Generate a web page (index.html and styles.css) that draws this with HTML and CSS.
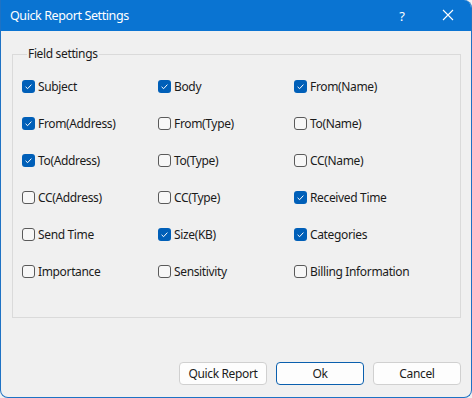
FILE: index.html
```html
<!DOCTYPE html>
<html>
<head>
<meta charset="utf-8">
<link rel="stylesheet" href="styles.css">
</head>
<body>
<div class="window">
  <div class="titlebar">
    <span class="title">Quick Report Settings</span>
    <span class="help">?</span>
    <span class="close">
      <svg width="12" height="12" viewBox="0 0 12 12"><path d="M1 1 L11 11 M11 1 L1 11" stroke="#fff" stroke-width="1.1" fill="none"/></svg>
    </span>
  </div>
  <div class="content">
    <fieldset class="group">
      <legend class="legend">Field settings</legend>
      <div class="grid">
        <label class="item"><span class="box on"><svg width="13" height="13" viewBox="0 0 13 13"><path d="M3.6 6.8 L5.6 8.7 L9.4 4.6" stroke="#fff" stroke-width="1" fill="none"/></svg></span>Subject</label>
        <label class="item"><span class="box on"><svg width="13" height="13" viewBox="0 0 13 13"><path d="M3.6 6.8 L5.6 8.7 L9.4 4.6" stroke="#fff" stroke-width="1" fill="none"/></svg></span>Body</label>
        <label class="item"><span class="box on"><svg width="13" height="13" viewBox="0 0 13 13"><path d="M3.6 6.8 L5.6 8.7 L9.4 4.6" stroke="#fff" stroke-width="1" fill="none"/></svg></span>From(Name)</label>

        <label class="item"><span class="box on"><svg width="13" height="13" viewBox="0 0 13 13"><path d="M3.6 6.8 L5.6 8.7 L9.4 4.6" stroke="#fff" stroke-width="1" fill="none"/></svg></span>From(Address)</label>
        <label class="item"><span class="box"></span>From(Type)</label>
        <label class="item"><span class="box"></span>To(Name)</label>

        <label class="item"><span class="box on"><svg width="13" height="13" viewBox="0 0 13 13"><path d="M3.6 6.8 L5.6 8.7 L9.4 4.6" stroke="#fff" stroke-width="1" fill="none"/></svg></span>To(Address)</label>
        <label class="item"><span class="box"></span>To(Type)</label>
        <label class="item"><span class="box"></span>CC(Name)</label>

        <label class="item"><span class="box"></span>CC(Address)</label>
        <label class="item"><span class="box"></span>CC(Type)</label>
        <label class="item"><span class="box on"><svg width="13" height="13" viewBox="0 0 13 13"><path d="M3.6 6.8 L5.6 8.7 L9.4 4.6" stroke="#fff" stroke-width="1" fill="none"/></svg></span>Received Time</label>

        <label class="item"><span class="box"></span>Send Time</label>
        <label class="item"><span class="box on"><svg width="13" height="13" viewBox="0 0 13 13"><path d="M3.6 6.8 L5.6 8.7 L9.4 4.6" stroke="#fff" stroke-width="1" fill="none"/></svg></span>Size(KB)</label>
        <label class="item"><span class="box on"><svg width="13" height="13" viewBox="0 0 13 13"><path d="M3.6 6.8 L5.6 8.7 L9.4 4.6" stroke="#fff" stroke-width="1" fill="none"/></svg></span>Categories</label>

        <label class="item"><span class="box"></span>Importance</label>
        <label class="item"><span class="box"></span>Sensitivity</label>
        <label class="item"><span class="box"></span>Billing Information</label>
      </div>
    </fieldset>
    <div class="buttons">
      <button class="btn">Quick Report</button>
      <button class="btn primary">Ok</button>
      <button class="btn">Cancel</button>
    </div>
  </div>
</div>
</body>
</html>
```

FILE: styles.css
```css
html, body {
  margin: 0;
  padding: 0;
  background: #f0f0f0;
}
body {
  font-family: "Noto Sans", "Open Sans", sans-serif;
  font-size: 12px;
  letter-spacing: -0.35px;
  color: #1b1b1b;
}
.window {
  width: 472px;
  height: 398px;
  box-sizing: border-box;
  background: #f0f0f0;
  border: 1px solid #1e72c4;
  border-top: none;
  border-radius: 0 8px 8px 8px;
  overflow: hidden;
  display: flex;
  flex-direction: column;
}
.titlebar {
  height: 31px;
  flex: none;
  background: #0a74d2;
  color: #fff;
  display: flex;
  align-items: center;
  padding-left: 9px;
}
.title {
  font-size: 12.5px;
  letter-spacing: -0.4px;
  flex: 1;
}
.help {
  font-size: 13px;
  width: 46px;
  text-align: center;
  margin-right: 0;
}
.close {
  width: 46px;
  display: flex;
  justify-content: center;
  align-items: center;
  padding-bottom: 1px;
}
.content {
  flex: 1;
  display: flex;
  flex-direction: column;
  padding: 15px 10px 0 11px;
}
.group {
  margin: 0;
  padding: 6px 0 0 9px;
  border: 1px solid #dadada;
  height: 272px;
  box-sizing: border-box;
  min-width: 0;
}
.legend {
  padding: 0 1px;
  margin-left: 5px;
  line-height: 16px;
  color: #1b1b1b;
}
.grid {
  display: grid;
  grid-template-columns: 136px 136px 136px;
  grid-auto-rows: 37px;
}
.item {
  display: flex;
  align-items: center;
  gap: 3px;
  white-space: nowrap;
}
.box {
  width: 13px;
  height: 13px;
  box-sizing: border-box;
  border: 1px solid #5a5a5a;
  border-radius: 3px;
  background: #f7f7f7;
  flex: none;
  display: flex;
}
.box.on {
  border: none;
  background: #005fb8;
}
.buttons {
  display: flex;
  justify-content: flex-end;
  gap: 9px;
  margin-top: 44px;
}
.btn {
  width: 88px;
  height: 23px;
  box-sizing: border-box;
  background: #fdfdfd;
  border: 1px solid #d0d0d0;
  border-radius: 4px;
  font-family: inherit;
  font-size: 12px;
  letter-spacing: -0.35px;
  color: #1b1b1b;
  padding: 0;
}
.btn.primary {
  border-color: #0a5fae;
}
```
